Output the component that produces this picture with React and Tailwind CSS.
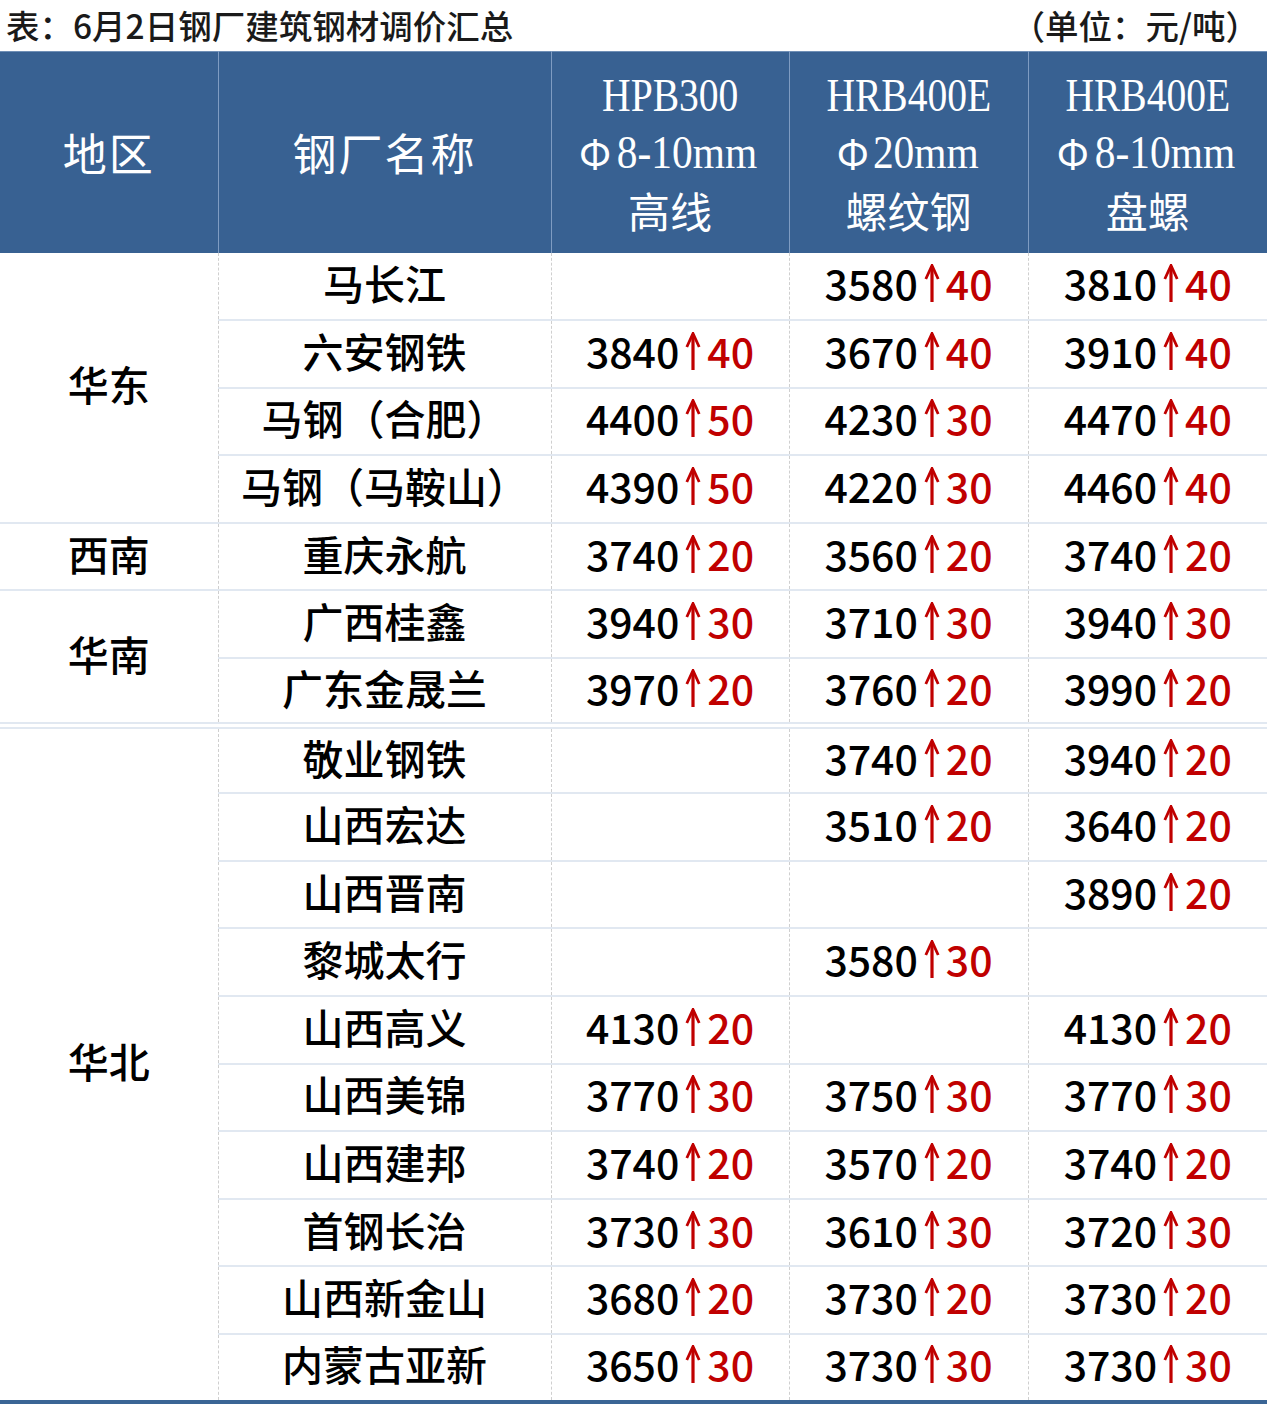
const sans = { fontFamily: '"Noto Sans CJK SC", "Noto Sans", sans-serif' };

const regions = [
  {
    name: '华东',
    rows: [
      ['马长江', null, [3580, 40], [3810, 40]],
      ['六安钢铁', [3840, 40], [3670, 40], [3910, 40]],
      ['马钢（合肥）', [4400, 50], [4230, 30], [4470, 40]],
      ['马钢（马鞍山）', [4390, 50], [4220, 30], [4460, 40]],
    ],
  },
  {
    name: '西南',
    rows: [['重庆永航', [3740, 20], [3560, 20], [3740, 20]]],
  },
  {
    name: '华南',
    double: true,
    rows: [
      ['广西桂鑫', [3940, 30], [3710, 30], [3940, 30]],
      ['广东金晟兰', [3970, 20], [3760, 20], [3990, 20]],
    ],
  },
  {
    name: '华北',
    last: true,
    rows: [
      ['敬业钢铁', null, [3740, 20], [3940, 20]],
      ['山西宏达', null, [3510, 20], [3640, 20]],
      ['山西晋南', null, null, [3890, 20]],
      ['黎城太行', null, [3580, 30], null],
      ['山西高义', [4130, 20], null, [4130, 20]],
      ['山西美锦', [3770, 30], [3750, 30], [3770, 30]],
      ['山西建邦', [3740, 20], [3570, 20], [3740, 20]],
      ['首钢长治', [3730, 30], [3610, 30], [3720, 30]],
      ['山西新金山', [3680, 20], [3730, 20], [3730, 20]],
      ['内蒙古亚新', [3650, 30], [3730, 30], [3730, 30]],
    ],
  },
];

// red up-arrow between price and change
function UpArrow() {
  return (
    <span className="inline-flex w-[28px] justify-center" aria-label="↑">
      <svg width="16" height="38" viewBox="0 0 16 38" className="mt-[2px]">
        <path d="M8 2.5 V38" stroke="#c00000" strokeWidth="3.2" fill="none" />
        <path d="M1.8 15 L8 1.5 L14.2 15" stroke="#c00000" strokeWidth="2.8" fill="none" strokeLinejoin="miter" />
      </svg>
    </span>
  );
}

function Price({ value }) {
  if (!value) return null;
  return (
    <span className="inline-flex items-center">
      <span>{value[0]}</span>
      <UpArrow />
      <span className="text-[#c00000]">{value[1]}</span>
    </span>
  );
}

function HeadCell({ lines, width }) {
  return (
    <th className={`${width} border-l border-[#7f9cc2] first:border-l-0 font-normal text-white align-middle`}>
      <div className="flex flex-col items-center">
        {lines.map((l, i) => (
          <div key={i} className="h-[57px] flex items-center">
            {l}
          </div>
        ))}
      </div>
    </th>
  );
}

const serifFont = { fontFamily: '"Liberation Serif", "Noto Sans CJK SC", serif' };

const serif = (t) => (
  <span className="inline-block scale-x-[0.86] text-[46px]" style={serifFont}>
    {t}
  </span>
);

const phi = (t) => (
  <span className="inline-flex items-center">
    <span className="text-[40px] mr-[2px]">Φ</span>
    <span className="inline-block scale-x-[0.9] text-[46px] -mx-[4px]" style={serifFont}>
      {t}
    </span>
  </span>
);

export default function App() {
  return (
    <div className="w-[1267px] bg-white text-black" style={sans}>
      <div className="h-[51px] flex items-center justify-between pl-[6px] pr-[8px] text-[33.5px] font-medium text-[#1a1a1a]">
        <span>表：6月2日钢厂建筑钢材调价汇总</span>
        <span>（单位：元/吨）</span>
      </div>
      <table className="w-full table-fixed border-collapse">
        <thead>
          <tr className="h-[201px] bg-[#386192] border-t border-[#6f8fb6]">
            <HeadCell width="w-[218px]" lines={[<span className="text-[44px] tracking-[2px]">地区</span>]} />
            <HeadCell width="w-[333px]" lines={[<span className="text-[44px] tracking-[2px]">钢厂名称</span>]} />
            <HeadCell
              width="w-[238px]"
              lines={[serif('HPB300'), phi('8-10mm'), <span className="text-[42px]">高线</span>]}
            />
            <HeadCell
              width="w-[239px]"
              lines={[serif('HRB400E'), phi('20mm'), <span className="text-[42px]">螺纹钢</span>]}
            />
            <HeadCell
              width="w-[239px]"
              lines={[serif('HRB400E'), phi('8-10mm'), <span className="text-[42px]">盘螺</span>]}
            />
          </tr>
        </thead>
        <tbody className="text-[41px] leading-[50px] font-medium">
          {regions.map((r) =>
            r.rows.map((row, i) => {
              const lastRow = i === r.rows.length - 1;
              const border = lastRow
                ? r.double
                  ? 'border-b-[7px] border-double border-b-[#e1e8f1]'
                  : r.last
                  ? 'border-b-4 border-b-[#3a6595]'
                  : 'border-b-2 border-b-[#e1e8f1]'
                : 'border-b-2 border-b-[#e1e8f1]';
              return (
                <tr key={row[0]} className={`h-[67.6px] ${border}`}>
                  {i === 0 && (
                    <td rowSpan={r.rows.length} className="text-center align-middle pb-[8px]">
                      {r.name}
                    </td>
                  )}
                  <td className="text-center pb-[8px] border-l border-dashed border-l-[#cfcfcf]">{row[0]}</td>
                  {row.slice(1).map((v, j) => (
                    <td key={j} className="text-center pb-[8px] border-l border-dashed border-l-[#cfcfcf]">
                      <Price value={v} />
                    </td>
                  ))}
                </tr>
              );
            })
          )}
        </tbody>
      </table>
    </div>
  );
}
